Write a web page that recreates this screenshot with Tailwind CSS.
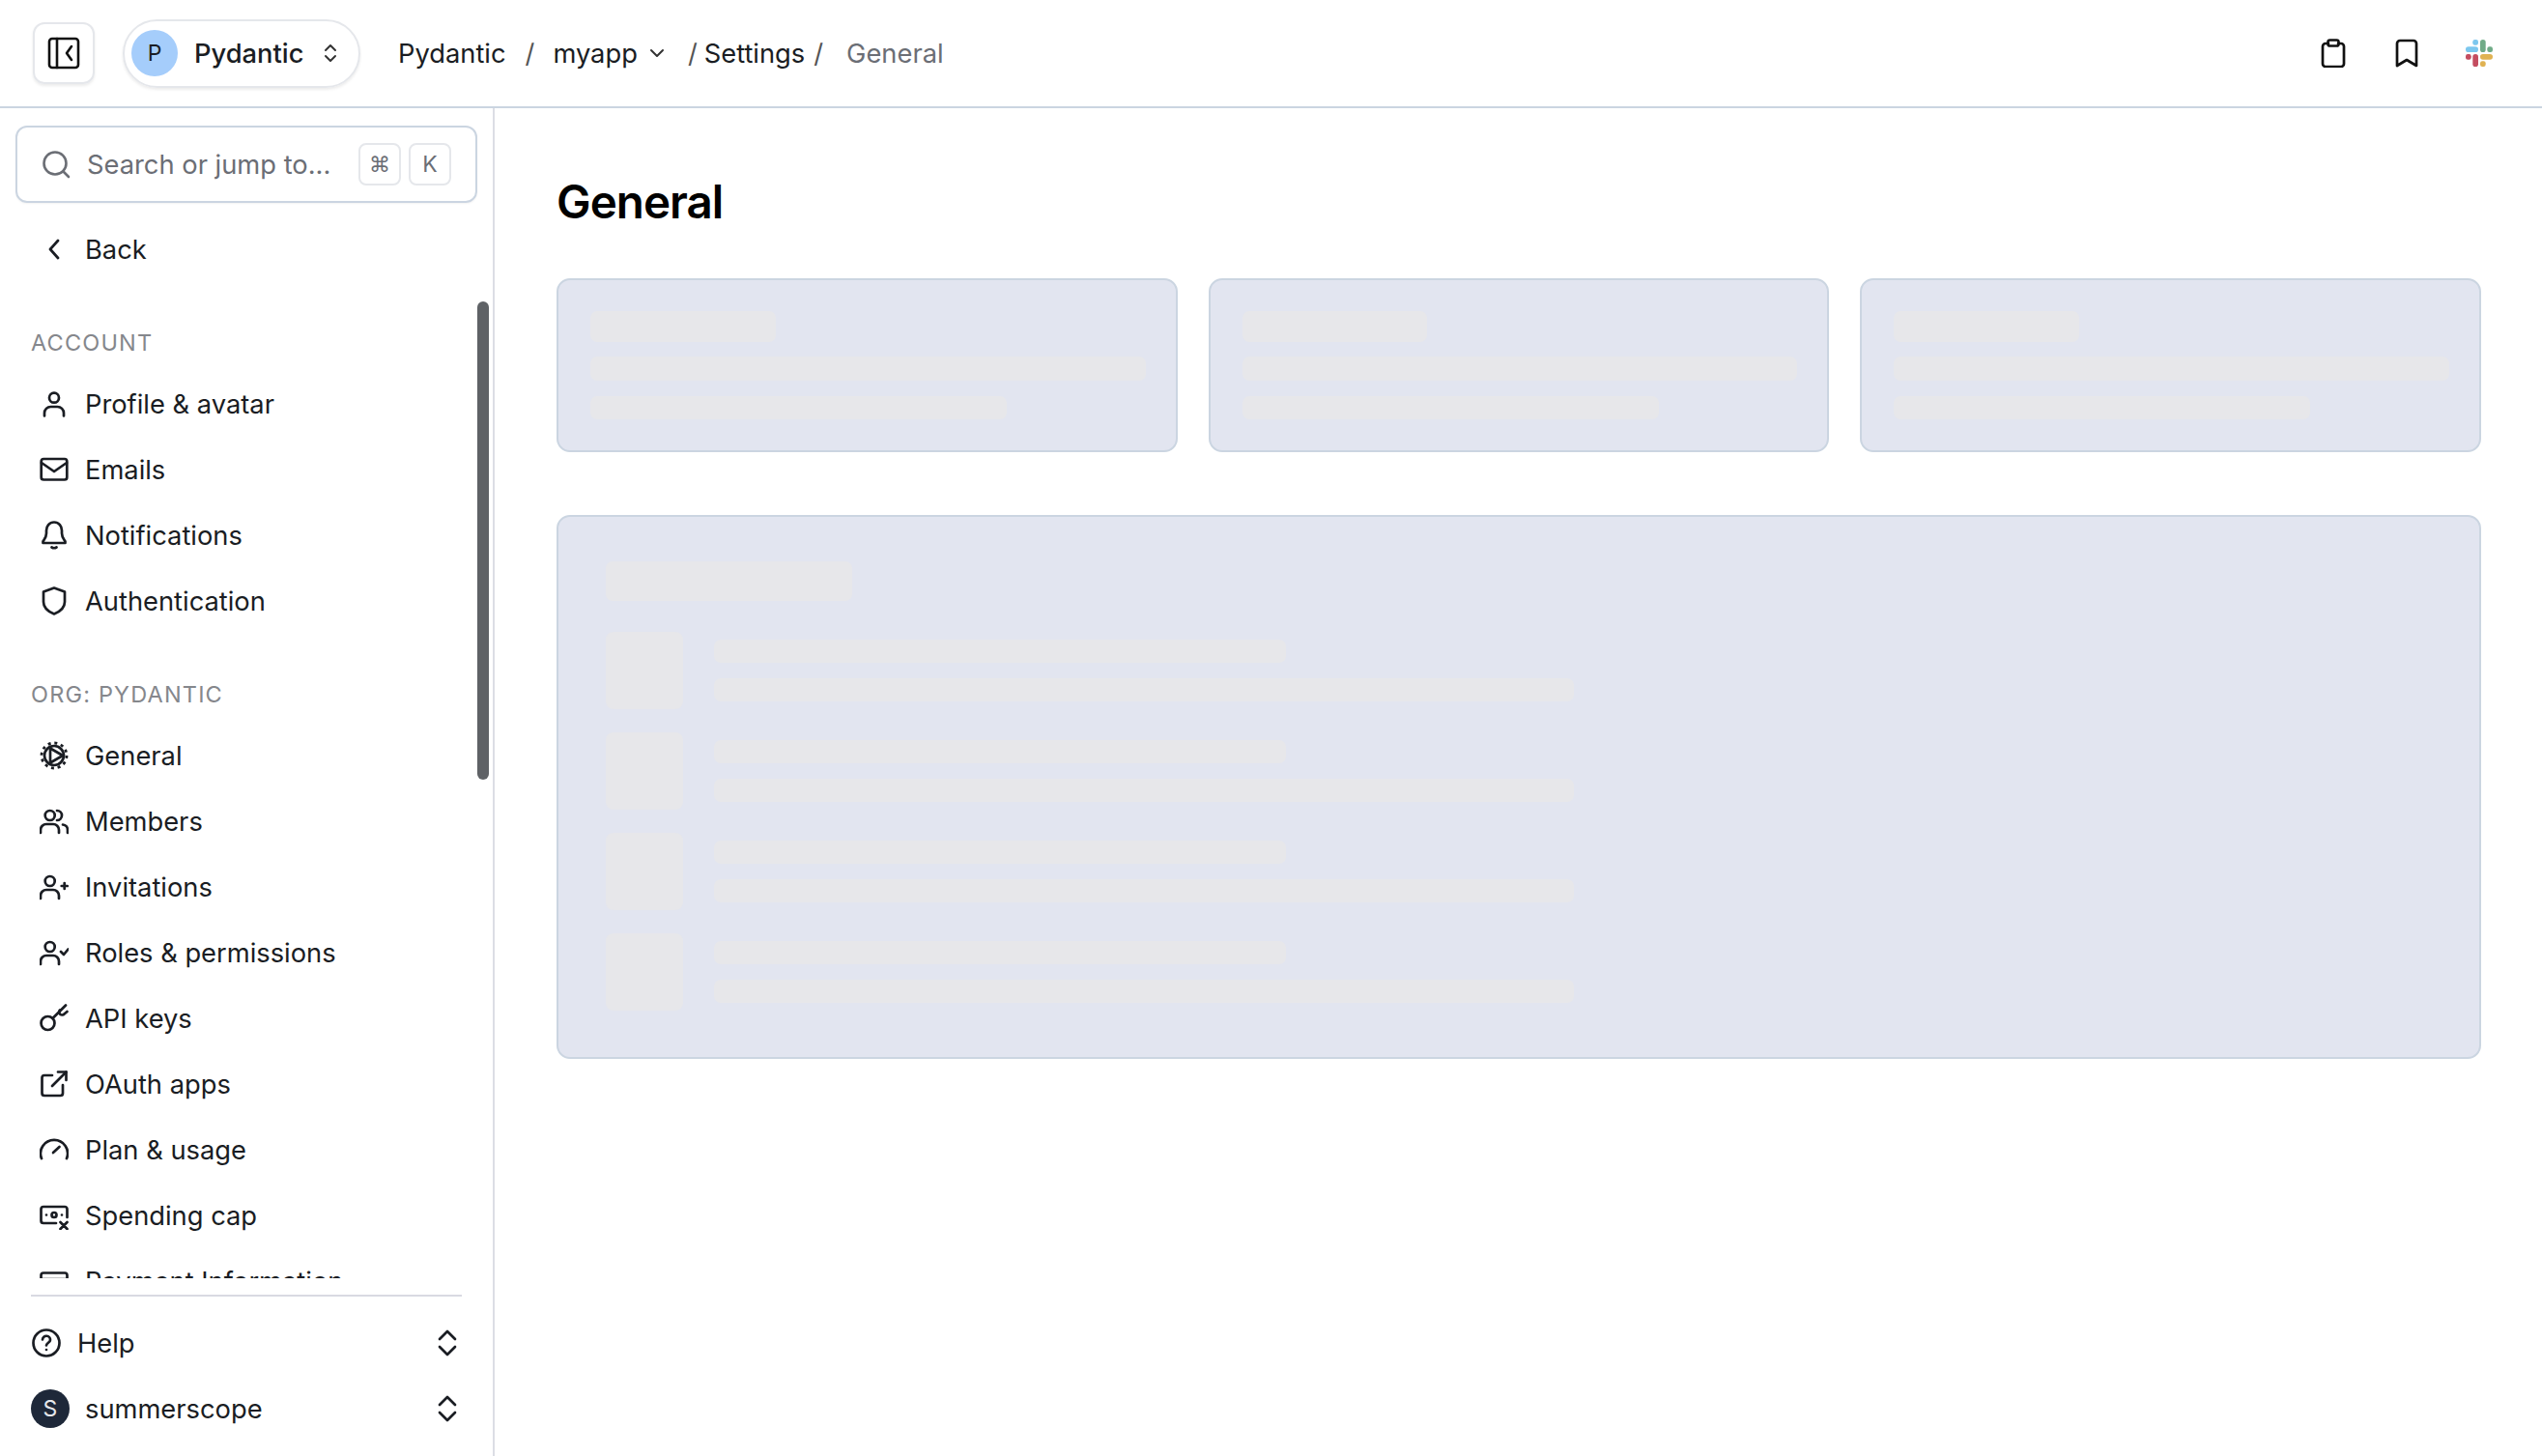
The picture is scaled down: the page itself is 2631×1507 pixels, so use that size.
<!DOCTYPE html>
<html lang="en">
<head>
  <meta charset="UTF-8" />
  <meta name="viewport" content="width=device-width, initial-scale=1" />
  <title>General</title>
  <script src="https://cdn.jsdelivr.net/npm/@tailwindcss/browser@4"></script>
</head>
<body class="bg-white font-['Inter',sans-serif] text-[27.3px] text-[#1a1d23] h-[1507px] overflow-hidden">

<!-- Header -->
<header class="h-[112px] border-b-2 border-[#cbd5e1] flex items-center pl-[34px] pr-[51px]">
  <button class="w-[64px] h-[64px] rounded-[12px] border-2 border-[#e5e7eb] shadow-[0_2px_3px_rgba(0,0,0,0.08)] flex items-center justify-center">
    <svg class="w-[36px] h-[36px]" viewBox="0 0 36 36" fill="none" stroke="#111" stroke-width="2.6" stroke-linecap="round" stroke-linejoin="round">
      <rect x="3" y="3" width="30" height="30" rx="3"/><path d="M11 3v30"/><path d="M26 11l-5 7 5 7"/>
    </svg>
  </button>
  <button class="ml-[29px] w-[246px] h-[71px] rounded-full border-2 border-[#e5e7eb] shadow-[0_2px_3px_rgba(0,0,0,0.08)] flex items-center pl-[7px]">
    <span class="w-[48px] h-[48px] rounded-full bg-[#a5cdfb] flex items-center justify-center text-[23px] text-[#1a1d23]">P</span>
    <span class="ml-[17px] mt-[2px] font-medium">Pydantic</span>
    <svg class="ml-[21px] w-[14px] h-[20px]" viewBox="0 0 14 20" fill="none" stroke="#333" stroke-width="2" stroke-linecap="round" stroke-linejoin="round"><path d="M2 7l5-5 5 5"/><path d="M2 13l5 5 5-5"/></svg>
  </button>
  <nav class="ml-[39px] flex items-center">
    <span class="mt-[2px]">Pydantic</span>
    <span class="ml-[20px] mt-[2px] text-[#555]">/</span>
    <span class="ml-[19px] mt-[2px]">myapp</span>
    <svg class="ml-[12px] w-[16px] h-[10px]" viewBox="0 0 16 10" fill="none" stroke="#333" stroke-width="2" stroke-linecap="round" stroke-linejoin="round"><path d="M2 2l6 6 6-6"/></svg>
    <span class="ml-[24px] mt-[2px] text-[#555]">/</span>
    <span class="ml-[7px] mt-[2px]">Settings</span>
    <span class="ml-[9px] mt-[2px] text-[#555]">/</span>
    <span class="ml-[24px] mt-[2px] text-[#6b6e75]">General</span>
  </nav>
  <div class="ml-auto flex items-center gap-[46px]">
    <svg class="w-[30px] h-[30px]" viewBox="0 0 30 30" fill="none" stroke="#111" stroke-width="2.7" stroke-linecap="round" stroke-linejoin="round">
      <path d="M10 5H7a3 3 0 0 0-3 3v18a3 3 0 0 0 3 3h16a3 3 0 0 0 3-3V8a3 3 0 0 0-3-3h-3"/><rect x="9.5" y="1.5" width="11" height="6" rx="2"/>
    </svg>
    <svg class="w-[30px] h-[30px]" viewBox="0 0 30 30" fill="none" stroke="#111" stroke-width="2.7" stroke-linecap="round" stroke-linejoin="round">
      <path d="M5 5a3 3 0 0 1 3-3h14a3 3 0 0 1 3 3v23l-10-6-10 6z"/>
    </svg>
    <svg class="w-[28px] h-[28px]" viewBox="0 0 28 28">
      <rect x="0" y="7.3" width="13" height="5.7" rx="2.85" fill="#7cc7ee"/><rect x="7.3" y="0" width="5.7" height="5.7" rx="2.2" fill="#7cc7ee"/>
      <rect x="15" y="0" width="5.7" height="13" rx="2.85" fill="#70ab87"/><rect x="22.3" y="7.3" width="5.7" height="5.7" rx="2.2" fill="#70ab87"/>
      <rect x="15" y="15" width="13" height="5.7" rx="2.85" fill="#e0b252"/><rect x="15" y="22.3" width="5.7" height="5.7" rx="2.2" fill="#e0b252"/>
      <rect x="7.3" y="15" width="5.7" height="13" rx="2.85" fill="#c44d60"/><rect x="0" y="15" width="5.7" height="5.7" rx="2.2" fill="#c44d60"/>
    </svg>
  </div>
</header>

<div class="flex h-[1395px]">
  <!-- Sidebar -->
  <aside class="relative w-[512px] shrink-0 border-r-2 border-[#dcdde5] flex flex-col">
    <div class="flex-1 min-h-0 overflow-hidden pt-[18px]">
      <div class="ml-[16px] w-[478px] h-[80px] rounded-[12px] border-2 border-[#cbd5e1] flex items-center pl-[25px] pr-[25px] shadow-[0_1px_2px_rgba(0,0,0,0.05)]">
        <svg class="w-[30px] h-[30px] shrink-0" viewBox="0 0 30 30" fill="none" stroke="#6b6e75" stroke-width="2.6" stroke-linecap="round"><circle cx="14" cy="14" r="11.5"/><path d="M22.5 22.5l5.500 5.500"/></svg>
        <span class="ml-[17px] mt-[2px] text-[#6b6e75] whitespace-nowrap">Search or jump to...</span>
        <span class="ml-auto w-[44px] h-[44px] rounded-[8px] border-2 border-[#e5e7eb] flex items-center justify-center text-[22px] text-[#6b6e75] font-['DejaVu_Sans',sans-serif]">⌘</span>
        <span class="ml-[8px] w-[44px] h-[44px] rounded-[8px] border-2 border-[#e5e7eb] flex items-center justify-center text-[23px] text-[#6b6e75]">K</span>
      </div>

      <div class="mt-[14px] pl-[41px] flex flex-col">
        <a class="h-[68px] flex items-center gap-[17px]">
          <svg class="w-[30px] h-[30px] shrink-0" viewBox="0 0 30 30" fill="none" stroke="#1a1d23" stroke-width="2.7" stroke-linecap="round" stroke-linejoin="round"><path d="M19 6l-8 9 8 9"/></svg>
          <span class="mt-[2px]">Back</span>
        </a>
      </div>

      <div class="mt-[43px] h-[40px] mb-[9px] pl-[32px] flex items-center text-[23.5px] tracking-[0.05em] text-[#85878c]">ACCOUNT</div>
      <div class="pl-[41px] flex flex-col">
        <a class="h-[68px] flex items-center gap-[17px]">
          <svg class="w-[30px] h-[30px] shrink-0" viewBox="0 0 30 30" fill="none" stroke="#1a1d23" stroke-width="2.7" stroke-linecap="round" stroke-linejoin="round"><circle cx="15" cy="8.7" r="5"/><path d="M5 27.5v-3a6.5 6.5 0 0 1 6.5-6.5h7a6.5 6.5 0 0 1 6.5 6.5v3"/></svg>
          <span class="mt-[2px]">Profile &amp; avatar</span>
        </a>
        <a class="h-[68px] flex items-center gap-[17px]">
          <svg class="w-[30px] h-[30px] shrink-0" viewBox="0 0 30 30" fill="none" stroke="#1a1d23" stroke-width="2.7" stroke-linecap="round" stroke-linejoin="round"><rect x="1.7" y="4" width="26.6" height="21.5" rx="2.5"/><path d="M2 8l13 9 13-9"/></svg>
          <span class="mt-[2px]">Emails</span>
        </a>
        <a class="h-[68px] flex items-center gap-[17px]">
          <svg class="w-[30px] h-[30px] shrink-0" viewBox="0 0 30 30" fill="none" stroke="#1a1d23" stroke-width="2.7" stroke-linecap="round" stroke-linejoin="round"><path d="M15 1.5C10 1.5 7 5.500 7 10v3c0 4-2 6-3.500 8.500V23h23v-1.500C25 19 23 17 23 13v-3c0-4.500-3-8.500-8-8.500z"/><path d="M12.500 27.500q2.500 1.500 5 0"/></svg>
          <span class="mt-[2px]">Notifications</span>
        </a>
        <a class="h-[68px] flex items-center gap-[17px]">
          <svg class="w-[30px] h-[30px] shrink-0" viewBox="0 0 30 30" fill="none" stroke="#1a1d23" stroke-width="2.7" stroke-linecap="round" stroke-linejoin="round"><path d="M15 1.500l11 4V16c0 7-6 10.500-11 12.500C10 26.500 4 23 4 16V5.500z"/></svg>
          <span class="mt-[2px]">Authentication</span>
        </a>
      </div>

      <div class="mt-[43px] h-[40px] mb-[9px] pl-[32px] flex items-center text-[23.5px] tracking-[0.05em] text-[#85878c]">ORG: PYDANTIC</div>
      <div class="pl-[41px] flex flex-col">
        <a class="h-[68px] flex items-center gap-[17px]">
          <svg class="w-[30px] h-[30px] shrink-0" viewBox="0 0 30 30" fill="none" stroke="#1a1d23" stroke-width="2.7" stroke-linecap="round" stroke-linejoin="round"><circle cx="15" cy="15" r="10"/><circle cx="15" cy="15" r="13" stroke-width="2.8" stroke-linecap="butt" stroke-dasharray="3 3.8"/><path d="M11 6v18M11 7.500L24 15 11 22.500"/></svg>
          <span class="mt-[2px]">General</span>
        </a>
        <a class="h-[68px] flex items-center gap-[17px]">
          <svg class="w-[30px] h-[30px] shrink-0" viewBox="0 0 30 30" fill="none" stroke="#1a1d23" stroke-width="2.7" stroke-linecap="round" stroke-linejoin="round"><circle cx="10.7" cy="9" r="5"/><path d="M1 27v-3a6 6 0 0 1 6-6h7a6 6 0 0 1 6 6v3"/><path d="M18 4a5 5 0 0 1 0 10"/><path d="M24 18.500a5.500 5.500 0 0 1 5 5.500v3"/></svg>
          <span class="mt-[2px]">Members</span>
        </a>
        <a class="h-[68px] flex items-center gap-[17px]">
          <svg class="w-[30px] h-[30px] shrink-0" viewBox="0 0 30 30" fill="none" stroke="#1a1d23" stroke-width="2.7" stroke-linecap="round" stroke-linejoin="round"><circle cx="10.7" cy="9" r="5"/><path d="M1 27v-3a6 6 0 0 1 6-6h7a6 6 0 0 1 6 6v3"/><path d="M25.700 11v6M22.700 14h6"/></svg>
          <span class="mt-[2px]">Invitations</span>
        </a>
        <a class="h-[68px] flex items-center gap-[17px]">
          <svg class="w-[30px] h-[30px] shrink-0" viewBox="0 0 30 30" fill="none" stroke="#1a1d23" stroke-width="2.7" stroke-linecap="round" stroke-linejoin="round"><circle cx="10.7" cy="9" r="5"/><path d="M1 27v-3a6 6 0 0 1 6-6h7a6 6 0 0 1 6 6v3"/><path d="M22 14l3 3 4.500-5.500"/></svg>
          <span class="mt-[2px]">Roles &amp; permissions</span>
        </a>
        <a class="h-[68px] flex items-center gap-[17px]">
          <svg class="w-[30px] h-[30px] shrink-0" viewBox="0 0 30 30" fill="none" stroke="#1a1d23" stroke-width="2.7" stroke-linecap="round" stroke-linejoin="round"><circle cx="8.500" cy="20" r="7"/><path d="M13.500 15L27 1.500"/><path d="M21 6.500a3 3 0 0 0 4.500 4l3-2.500"/></svg>
          <span class="mt-[2px]">API keys</span>
        </a>
        <a class="h-[68px] flex items-center gap-[17px]">
          <svg class="w-[30px] h-[30px] shrink-0" viewBox="0 0 30 30" fill="none" stroke="#1a1d23" stroke-width="2.7" stroke-linecap="round" stroke-linejoin="round"><path d="M13 6H5a2.500 2.500 0 0 0-2.500 2.500v16A2.500 2.500 0 0 0 5 27h16.500a2.500 2.500 0 0 0 2.500-2.500V16"/><path d="M13 17L27.500 2.500"/><path d="M19 2.500h8.500V11"/></svg>
          <span class="mt-[2px]">OAuth apps</span>
        </a>
        <a class="h-[68px] flex items-center gap-[17px]">
          <svg class="w-[30px] h-[30px] shrink-0" viewBox="0 0 30 30" fill="none" stroke="#1a1d23" stroke-width="2.7" stroke-linecap="round" stroke-linejoin="round"><path d="M2 24a14 14 0 1 1 26 0"/><path d="M14 18l6.500-6"/></svg>
          <span class="mt-[2px]">Plan &amp; usage</span>
        </a>
        <a class="h-[68px] flex items-center gap-[17px]">
          <svg class="w-[30px] h-[30px] shrink-0" viewBox="0 0 30 30" fill="none" stroke="#1a1d23" stroke-width="2.7" stroke-linecap="round" stroke-linejoin="round"><path d="M17 23H4a2.500 2.500 0 0 1-2.500-2.500v-12A2.500 2.500 0 0 1 4 6h22a2.500 2.500 0 0 1 2.500 2.500V17"/><circle cx="15" cy="14.500" r="2.500"/><path d="M7 14.500h.01M23 14.500h.01"/><path d="M21.500 22l7 7M28.500 22l-7 7"/></svg>
          <span class="mt-[2px]">Spending cap</span>
        </a>
        <a class="h-[68px] flex items-center gap-[17px]">
          <svg class="w-[30px] h-[30px] shrink-0" viewBox="0 0 30 30" fill="none" stroke="#1a1d23" stroke-width="2.7" stroke-linecap="round" stroke-linejoin="round"><rect x="1.500" y="6.500" width="27" height="18" rx="2.500"/><path d="M1.500 13h27"/></svg>
          <span class="mt-[2px]">Payment Information</span>
        </a>
      </div>
    </div>

    <!-- Sidebar footer -->
    <div class="pt-[17px] pb-[15px]">
      <div class="mx-[32px] h-[2px] bg-[#d9dae2]"></div>
      <div class="mt-[14px]">
        <a class="h-[68px] pl-[33px] pr-[32px] flex items-center gap-[17px]">
          <svg class="w-[30px] h-[30px] shrink-0" viewBox="0 0 30 30" fill="none" stroke="#1a1d23" stroke-width="2.7" stroke-linecap="round" stroke-linejoin="round"><circle cx="15" cy="15" r="13.500"/><path d="M11 11.500a4 4 0 0 1 8 .5c0 2.500-4 3-4 5.500"/><path d="M15 22h.01"/></svg>
          <span class="mt-[2px]">Help</span>
          <svg class="ml-auto w-[30px] h-[30px] shrink-0" viewBox="0 0 30 30" fill="none" stroke="#1a1d23" stroke-width="2.7" stroke-linecap="round" stroke-linejoin="round"><path d="M7 11l8-8 8 8"/><path d="M7 19l8 8 8-8"/></svg>
        </a>
        <a class="h-[68px] pl-[32px] pr-[32px] flex items-center gap-[16px]">
          <span class="w-[40px] h-[40px] rounded-full bg-[#1e2839] text-[#e5e7eb] text-[23px] flex items-center justify-center shrink-0">S</span>
          <span class="mt-[2px]">summerscope</span>
          <svg class="ml-auto w-[30px] h-[30px] shrink-0" viewBox="0 0 30 30" fill="none" stroke="#1a1d23" stroke-width="2.7" stroke-linecap="round" stroke-linejoin="round"><path d="M7 11l8-8 8 8"/><path d="M7 19l8 8 8-8"/></svg>
        </a>
      </div>
    </div>

    <!-- Scrollbar overlay -->
    <div class="absolute left-[494px] top-[200px] w-[12px] h-[495px] rounded-full bg-[#5f6266]"></div>
  </aside>

  <!-- Main -->
  <main class="flex-1 pl-[64px] pr-[63px]">
    <h1 class="h-[176px] pt-[18px] flex items-center text-[47.5px] font-semibold text-black tracking-[-0.02em]">General</h1>
    <div class="grid grid-cols-3 gap-[32px]">
      <div class="h-[180px] rounded-[14px] border-2 border-[#cbd5e1] bg-[#e2e5f0] pl-[33px] pr-[31px] py-[32px]">
        <div class="w-1/3 h-[32px] rounded-[7px] bg-[#e7e7ea]"></div>
        <div class="mt-[15px] h-[25px] rounded-[7px] bg-[#e7e7ea]"></div>
        <div class="mt-[16px] w-3/4 h-[24px] rounded-[7px] bg-[#e7e7ea]"></div>
      </div>
      <div class="h-[180px] rounded-[14px] border-2 border-[#cbd5e1] bg-[#e2e5f0] pl-[33px] pr-[31px] py-[32px]">
        <div class="w-1/3 h-[32px] rounded-[7px] bg-[#e7e7ea]"></div>
        <div class="mt-[15px] h-[25px] rounded-[7px] bg-[#e7e7ea]"></div>
        <div class="mt-[16px] w-3/4 h-[24px] rounded-[7px] bg-[#e7e7ea]"></div>
      </div>
      <div class="h-[180px] rounded-[14px] border-2 border-[#cbd5e1] bg-[#e2e5f0] pl-[33px] pr-[31px] py-[32px]">
        <div class="w-1/3 h-[32px] rounded-[7px] bg-[#e7e7ea]"></div>
        <div class="mt-[15px] h-[25px] rounded-[7px] bg-[#e7e7ea]"></div>
        <div class="mt-[16px] w-3/4 h-[24px] rounded-[7px] bg-[#e7e7ea]"></div>
      </div>
    </div>

    <div class="mt-[65px] h-[563px] rounded-[14px] border-2 border-[#cbd5e1] bg-[#e2e5f0] pl-[49px] pt-[46px]">
      <div class="w-[255px] h-[41px] rounded-[7px] bg-[#e7e7ea]"></div>
      <div class="mt-[32px] flex flex-col gap-[24px]">
        <div class="flex gap-[32px]">
          <div class="w-[80px] h-[80px] rounded-[8px] bg-[#e7e7ea]"></div>
          <div class="pt-[8px] flex flex-col gap-[16px]">
            <div class="w-[592px] h-[24px] rounded-[7px] bg-[#e7e7ea]"></div>
            <div class="w-[890px] h-[24px] rounded-[7px] bg-[#e7e7ea]"></div>
          </div>
        </div>
        <div class="flex gap-[32px]">
          <div class="w-[80px] h-[80px] rounded-[8px] bg-[#e7e7ea]"></div>
          <div class="pt-[8px] flex flex-col gap-[16px]">
            <div class="w-[592px] h-[24px] rounded-[7px] bg-[#e7e7ea]"></div>
            <div class="w-[890px] h-[24px] rounded-[7px] bg-[#e7e7ea]"></div>
          </div>
        </div>
        <div class="flex gap-[32px]">
          <div class="w-[80px] h-[80px] rounded-[8px] bg-[#e7e7ea]"></div>
          <div class="pt-[8px] flex flex-col gap-[16px]">
            <div class="w-[592px] h-[24px] rounded-[7px] bg-[#e7e7ea]"></div>
            <div class="w-[890px] h-[24px] rounded-[7px] bg-[#e7e7ea]"></div>
          </div>
        </div>
        <div class="flex gap-[32px]">
          <div class="w-[80px] h-[80px] rounded-[8px] bg-[#e7e7ea]"></div>
          <div class="pt-[8px] flex flex-col gap-[16px]">
            <div class="w-[592px] h-[24px] rounded-[7px] bg-[#e7e7ea]"></div>
            <div class="w-[890px] h-[24px] rounded-[7px] bg-[#e7e7ea]"></div>
          </div>
        </div>
      </div>
    </div>
  </main>
</div>

</body>
</html>
